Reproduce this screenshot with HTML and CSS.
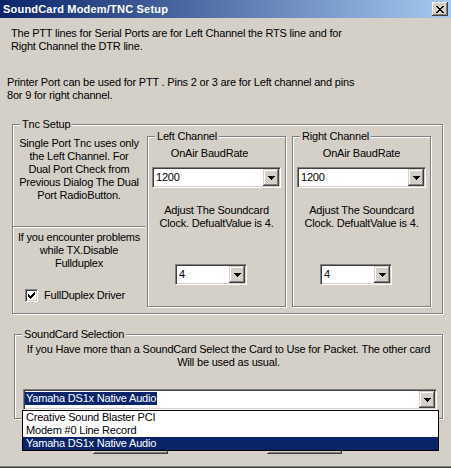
FILE: index.html
```html
<!DOCTYPE html>
<html lang="en">
<head>
<meta charset="utf-8">
<title>SoundCard Modem/TNC Setup</title>
<link rel="stylesheet" href="styles.css">
</head>
<body>
<div class="window">
  <div class="titlebar">
    <span class="title">SoundCard Modem/TNC Setup</span>
    <div class="close-btn">
      <svg width="8" height="7" viewBox="0 0 8 7"><path d="M0 0h2v1H0zM6 0h2v1H6zM1 1h2v1H1zM5 1h2v1H5zM2 2h4v1H2zM3 3h2v1H3zM2 4h4v1H2zM1 5h2v1H1zM5 5h2v1H5zM0 6h2v1H0zM6 6h2v1H6z" fill="#000"/></svg>
    </div>
  </div>

  <p class="intro intro-serial">The PTT lines for Serial Ports are for Left Channel the RTS line and for<br>Right Channel the DTR line.</p>
  <p class="intro intro-printer">Printer Port can be used for PTT . Pins 2 or 3 are for Left channel and pins<br>8or 9 for right channel.</p>

  <fieldset class="group group-tnc">
    <legend>Tnc Setup</legend>
    <div class="tnc-row">
      <div class="tnc-side">
        <div class="tnc-info">Single Port Tnc uses only<br>the Left Channel. For<br>Dual Port Check from<br>Previous Dialog The Dual<br>Port RadioButton.</div>
        <div class="separator"></div>
        <div class="tnc-warn">If you encounter problems<br>while TX.Disable<br>Fullduplex</div>
        <div class="checkbox-row">
          <span class="checkbox"><svg width="7" height="7" viewBox="0 0 7 7"><path d="M6 0h1v1H6zM5 1h2v1H5zM0 2h1v1H0zM4 2h3v1H4zM0 3h2v1H0zM3 3h3v1H3zM0 4h5v1H0zM1 5h3v1H1zM2 6h1v1H2z" fill="#000"/></svg></span>
          <span>FullDuplex Driver</span>
        </div>
      </div>

      <fieldset class="group group-channel">
        <legend>Left Channel</legend>
        <div class="channel-label channel-label-left">OnAir BaudRate</div>
        <div class="combo combo-baud">
          <span class="combo-value">1200</span>
          <span class="combo-btn"><svg width="7" height="4" viewBox="0 0 7 4"><path d="M0 0h7v1H0zM1 1h5v1H1zM2 2h3v1H2zM3 3h1v1H3z" fill="#000"/></svg></span>
        </div>
        <div class="channel-note">Adjust The Soundcard<br>Clock. DefualtValue is 4.</div>
        <div class="combo combo-clock">
          <span class="combo-value">4</span>
          <span class="combo-btn"><svg width="7" height="4" viewBox="0 0 7 4"><path d="M0 0h7v1H0zM1 1h5v1H1zM2 2h3v1H2zM3 3h1v1H3z" fill="#000"/></svg></span>
        </div>
      </fieldset>

      <fieldset class="group group-channel">
        <legend>Right Channel</legend>
        <div class="channel-label">OnAir BaudRate</div>
        <div class="combo combo-baud">
          <span class="combo-value">1200</span>
          <span class="combo-btn"><svg width="7" height="4" viewBox="0 0 7 4"><path d="M0 0h7v1H0zM1 1h5v1H1zM2 2h3v1H2zM3 3h1v1H3z" fill="#000"/></svg></span>
        </div>
        <div class="channel-note">Adjust The Soundcard<br>Clock. DefualtValue is 4.</div>
        <div class="combo combo-clock">
          <span class="combo-value">4</span>
          <span class="combo-btn"><svg width="7" height="4" viewBox="0 0 7 4"><path d="M0 0h7v1H0zM1 1h5v1H1zM2 2h3v1H2zM3 3h1v1H3z" fill="#000"/></svg></span>
        </div>
      </fieldset>
    </div>
  </fieldset>

  <fieldset class="group group-sound">
    <legend>SoundCard Selection</legend>
    <div class="sound-note">If you Have more than a SoundCard Select the Card to Use for Packet. The other card<br>Will be used as usual.</div>
    <div class="combo combo-sound">
      <span class="combo-value combo-value-sel"><span class="highlight">Yamaha DS1x Native Audio</span></span>
      <span class="combo-btn"><svg width="7" height="4" viewBox="0 0 7 4"><path d="M0 0h7v1H0zM1 1h5v1H1zM2 2h3v1H2zM3 3h1v1H3z" fill="#000"/></svg></span>
      <ul class="dropdown">
        <li>Creative Sound Blaster PCI</li>
        <li>Modem #0 Line Record</li>
        <li class="selected">Yamaha DS1x Native Audio</li>
      </ul>
    </div>
  </fieldset>

  <div class="button-row">
    <div class="btn btn-ok"></div>
    <div class="btn btn-cancel"></div>
  </div>
</div>
</body>
</html>
```
FILE: styles.css
```css
body {
  margin: 0;
  width: 451px;
  height: 468px;
  background: #D4D0C8;
  font-family: "Liberation Sans", Arial, sans-serif;
  font-size: 11px;
  line-height: 13px;
  letter-spacing: -0.2px;
  color: #000;
  overflow: hidden;
}

.window {
  height: 468px;
  box-sizing: border-box;
  box-shadow: inset 0 -1px #404040, inset 0 -2px #808080;
}

.titlebar {
  height: 18px;
  display: flex;
  align-items: center;
  justify-content: space-between;
  padding: 0 3px;
  background: linear-gradient(to right, #0A246A, #A6CAF0);
}

.title {
  color: #fff;
  font-weight: bold;
  letter-spacing: 0.2px;
}

.close-btn {
  width: 16px;
  height: 14px;
  box-sizing: border-box;
  display: flex;
  align-items: center;
  justify-content: center;
  background: #D4D0C8;
  box-shadow: inset -1px -1px #404040, inset 1px 1px #fff, inset -2px -2px #808080;
}

.intro {
  margin: 0;
}

.intro-serial {
  margin: 9px 0 0 11px;
}

.intro-printer {
  margin: 23px 0 0 7px;
}

.group {
  margin: 0;
  padding: 0;
  min-width: 0;
  box-sizing: border-box;
  border: 1px solid #808080;
  box-shadow: inset 1px 1px #fff, 1px 1px #fff;
}

.group legend {
  margin-left: 7px;
  padding: 0 2px;
  line-height: 13px;
  text-align: left;
  background: #D4D0C8;
}

.group-tnc {
  margin: 16px 0 0 12px;
  width: 431px;
  height: 196px;
}

.tnc-row {
  display: flex;
  margin-top: -1px;
}

.tnc-side {
  width: 132px;
  flex: none;
  text-align: center;
}

.tnc-info {
  height: 96px;
  padding-top: 7px;
  box-sizing: border-box;
}

.separator {
  border-top: 1px solid #808080;
  border-bottom: 1px solid #fff;
}

.tnc-warn {
  margin-top: 3px;
}

.checkbox-row {
  display: flex;
  align-items: center;
  gap: 6px;
  margin-top: 19px;
  padding-left: 12px;
  text-align: left;
}

.checkbox {
  width: 13px;
  height: 13px;
  box-sizing: border-box;
  padding: 2px;
  background: #fff;
  border: 1px solid;
  border-color: #808080 #fff #fff #808080;
  box-shadow: inset 1px 1px #404040, inset -1px -1px #D4D0C8;
  display: flex;
}

.checkbox svg {
  display: block;
}

.group-channel {
  width: 139px;
  height: 177px;
  flex: none;
  margin-left: 2px;
}

.group-channel + .group-channel {
  margin-left: 6px;
}

.channel-label {
  margin-top: 4px;
  text-align: center;
}

.channel-label-left {
  padding-right: 14px;
}

.channel-note {
  margin-top: 16px;
  text-align: center;
}

.combo {
  display: flex;
  height: 21px;
  box-sizing: border-box;
  padding: 1px;
  background: #fff;
  border: 1px solid;
  border-color: #808080 #fff #fff #808080;
  box-shadow: inset 1px 1px #404040, inset -1px -1px #D4D0C8;
}

.combo-value {
  flex: 1;
  padding-left: 2px;
  line-height: 17px;
  white-space: nowrap;
  overflow: hidden;
}

.combo-btn {
  width: 16px;
  height: 17px;
  flex: none;
  box-sizing: border-box;
  display: flex;
  align-items: center;
  justify-content: center;
  background: #D4D0C8;
  box-shadow: inset -1px -1px #404040, inset 1px 1px #D4D0C8, inset -2px -2px #808080, inset 2px 2px #fff;
}

.combo-btn svg {
  display: block;
}

.combo-baud {
  margin: 7px 4px 0;
}

.combo-clock {
  width: 72px;
  margin: 34px 0 0 27px;
}

.group-sound {
  margin: 14px 0 0 14px;
  width: 429px;
  height: 91px;
}

.sound-note {
  margin-top: 2px;
  text-align: center;
}

.combo-sound {
  position: relative;
  width: 414px;
  margin: 20px 0 0 8px;
}

.combo-value-sel {
  padding: 1px 0 0;
  line-height: 13px;
}

.highlight {
  display: inline-block;
  padding: 0 1px;
  background: #0A246A;
  color: #fff;
  vertical-align: top;
}

.dropdown {
  position: absolute;
  left: -2px;
  top: calc(100% + 1px);
  width: 417px;
  box-sizing: border-box;
  margin: 0;
  padding: 0;
  list-style: none;
  background: #fff;
  border: 1px solid #000;
  z-index: 1;
}

.dropdown li {
  padding-left: 3px;
  line-height: 13px;
}

.dropdown .selected {
  background: #0A246A;
  color: #fff;
}

.button-row {
  display: flex;
  margin-top: 12px;
}

.btn {
  width: 75px;
  height: 23px;
  flex: none;
  box-sizing: border-box;
  background: #D4D0C8;
  box-shadow: inset -1px -1px #404040, inset 1px 1px #fff, inset -2px -2px #808080;
}

.btn-ok {
  margin-left: 93px;
}

.btn-cancel {
  margin-left: 99px;
}
```
